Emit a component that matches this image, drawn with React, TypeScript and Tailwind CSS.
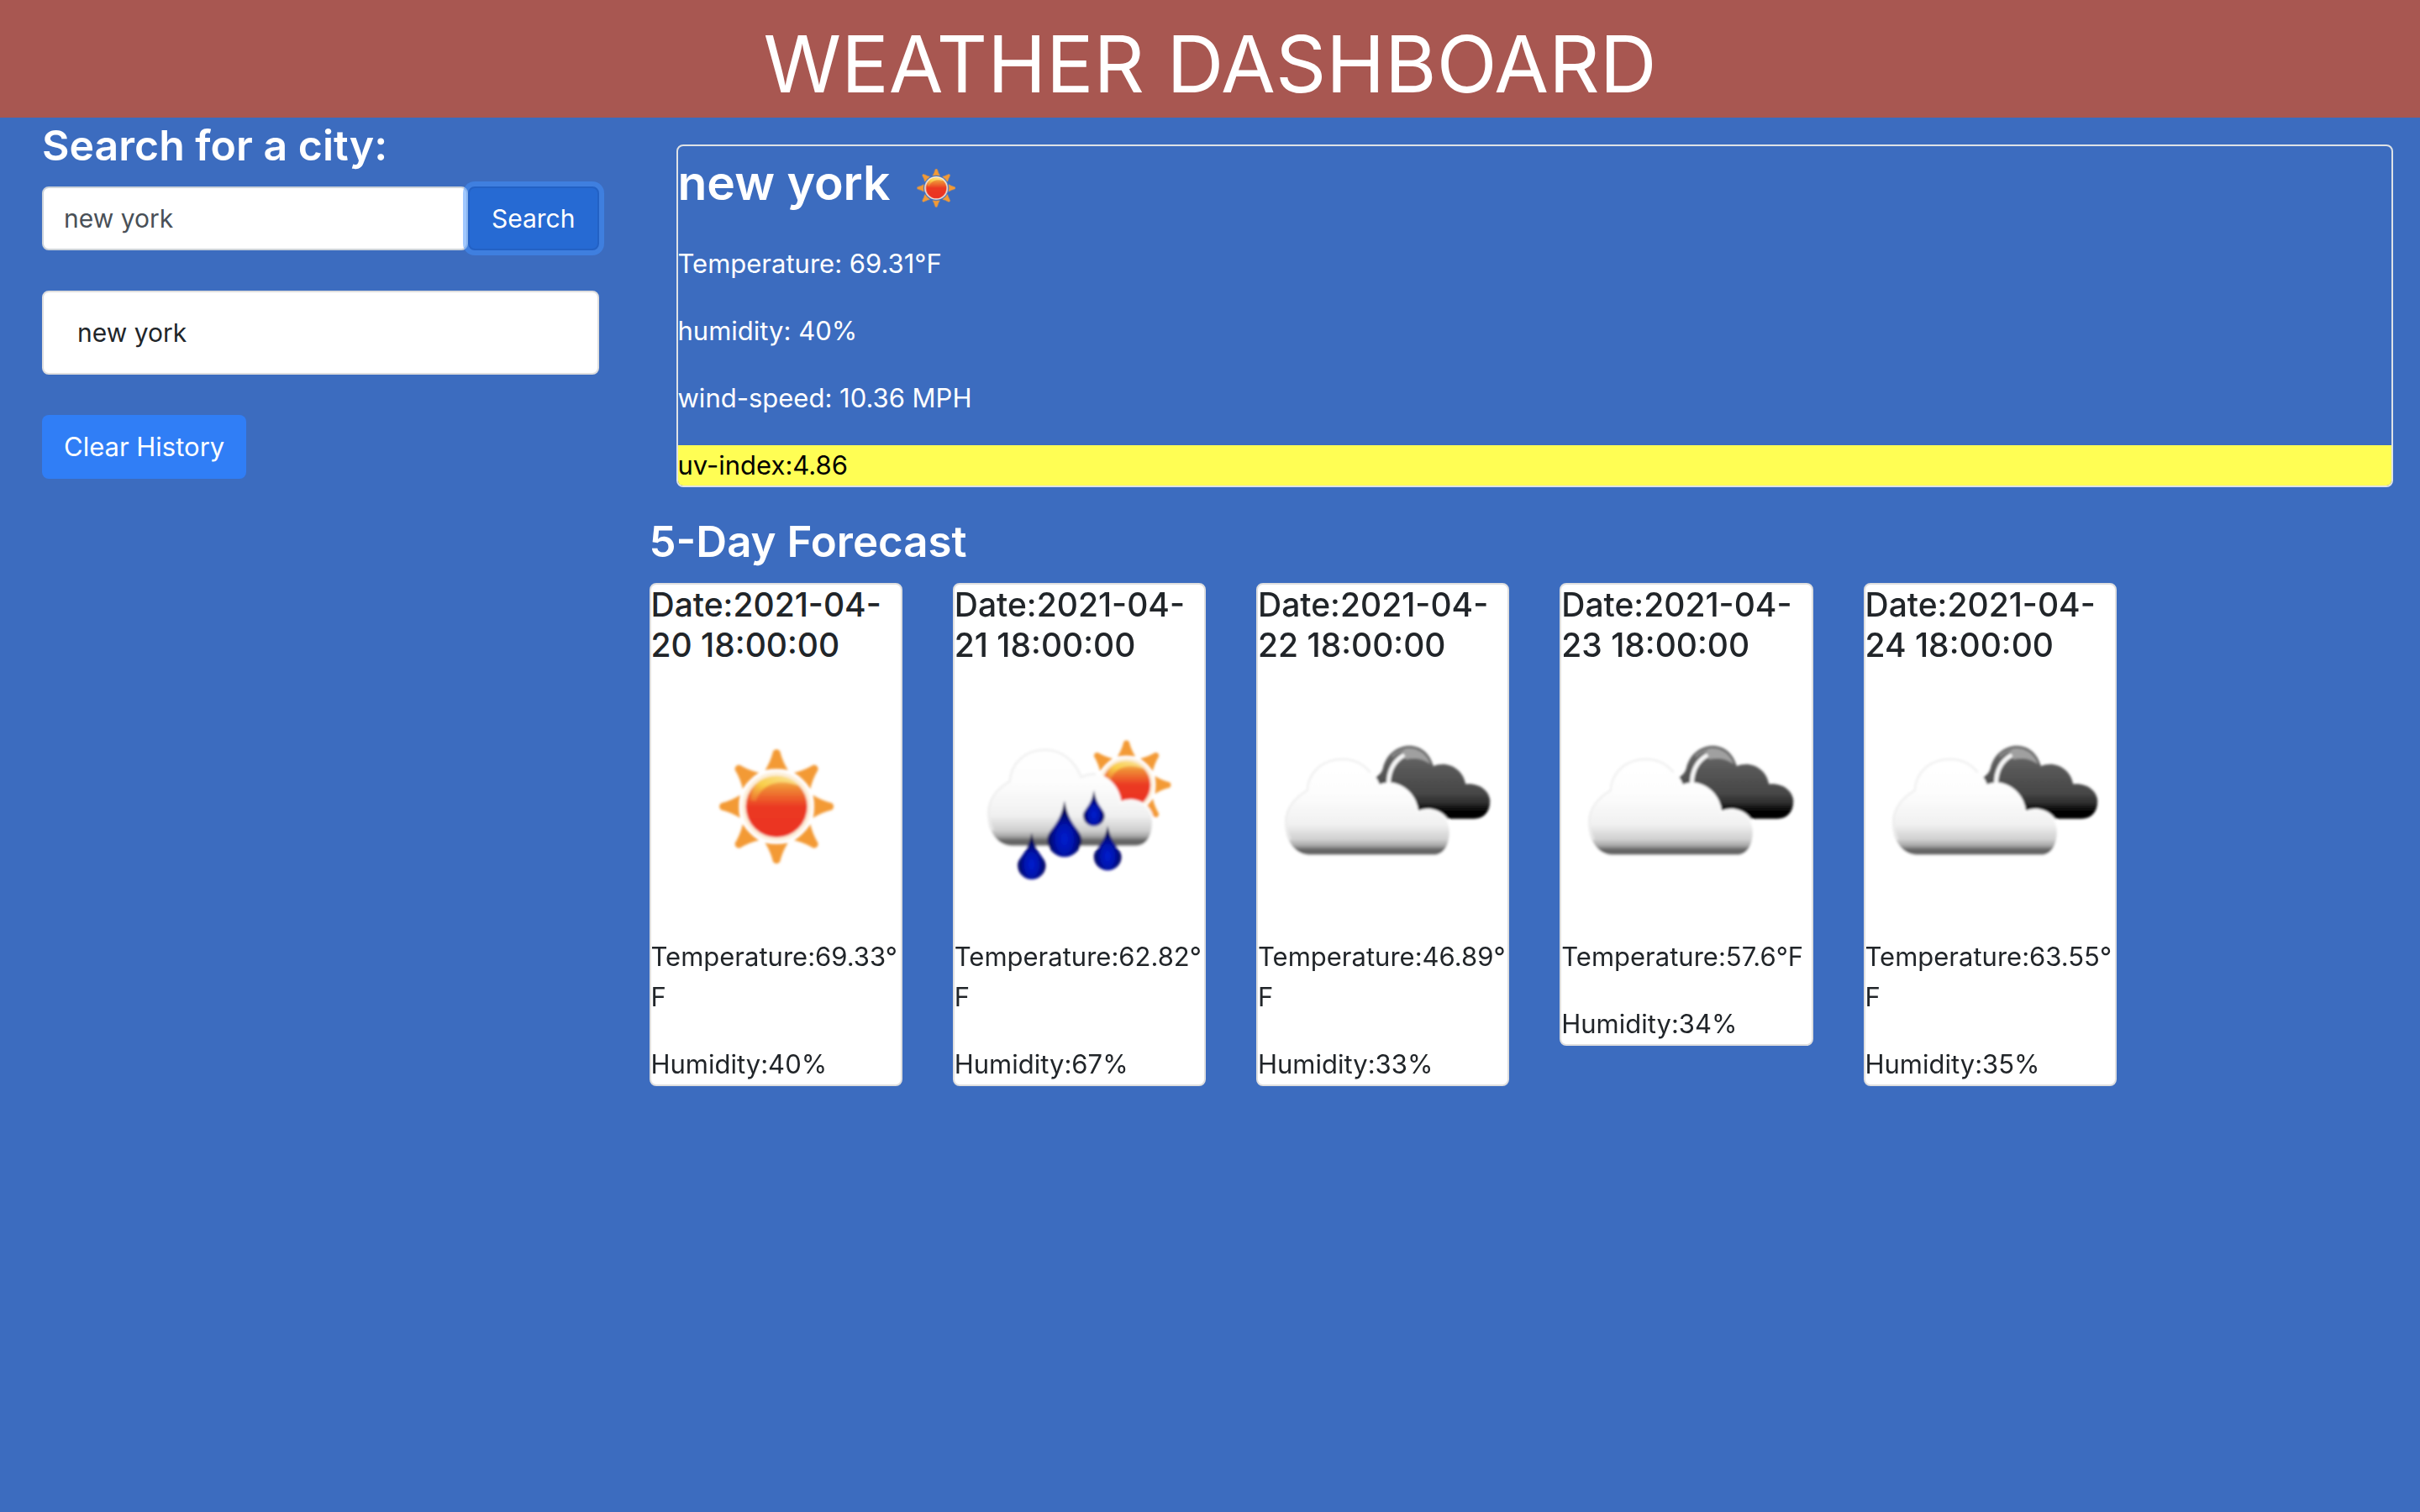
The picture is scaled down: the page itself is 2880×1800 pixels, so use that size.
import React, { useId, useState } from "react";

type IconKind = "sun" | "rain" | "clouds";

interface Day {
  date: string;
  icon: IconKind;
  temperature: string;
  humidity: string;
}

const FORECAST: Day[] = [
  { date: "2021-04-20 18:00:00", icon: "sun", temperature: "69.33°F", humidity: "40%" },
  { date: "2021-04-21 18:00:00", icon: "rain", temperature: "62.82°F", humidity: "67%" },
  { date: "2021-04-22 18:00:00", icon: "clouds", temperature: "46.89°F", humidity: "33%" },
  { date: "2021-04-23 18:00:00", icon: "clouds", temperature: "57.6°F", humidity: "34%" },
  { date: "2021-04-24 18:00:00", icon: "clouds", temperature: "63.55°F", humidity: "35%" },
];

const CLOUD =
  "M250 500 C195 496 165 440 165 380 C166 330 200 300 245 270 C248 205 300 158 370 158 C430 158 475 195 500 255 C560 230 628 270 637 350 C690 325 750 355 752 415 C752 460 735 500 695 500 Z";

const RAYS = [0, 45, 90, 135, 180, 225, 270, 315];

function Sun({ id, cx, cy, scale = 1 }: { id: string; cx: number; cy: number; scale?: number }) {
  return (
    <g transform={`translate(${cx} ${cy}) scale(${scale})`}>
      {RAYS.map((angle) => (
        <path
          key={angle}
          d="M-12 -198 Q0 -210 12 -198 Q22 -158 41 -130 Q0 -138 -41 -130 Q-22 -158 -12 -198 Z"
          transform={`rotate(${angle})`}
          fill="#f39a35"
        />
      ))}
      <circle r="124" fill="#fdf0dc" />
      <circle r="110" fill={`url(#${id}-sun)`} />
      <path
        d="M-92 -22 C-92 -82 -50 -108 0 -108 C34 -108 62 -96 80 -74 C30 -96 -48 -96 -74 -20 Z"
        fill={`url(#${id}-shine)`}
      />
    </g>
  );
}

function Drop({ id, x, top, bottom, r }: { id: string; x: number; top: number; bottom: number; r: number }) {
  const cy = bottom - r;
  return (
    <path
      d={`M${x} ${top} C${x + r * 0.25} ${cy - r * 0.8} ${x + r} ${cy - r * 0.6} ${x + r} ${cy} A${r} ${r} 0 0 1 ${x - r} ${cy} C${x - r} ${cy - r * 0.6} ${x - r * 0.25} ${cy - r * 0.8} ${x} ${top} Z`}
      fill={`url(#${id}-drop)`}
    />
  );
}

function WeatherIcon({ kind, className }: { kind: IconKind; className: string }) {
  const id = useId().replace(/[^a-zA-Z0-9]/g, "");
  const viewBox = {
    sun: "-138 -144 891 891",
    rain: "48 -84 891 891",
    clouds: "24 -114 891 891",
  }[kind];
  return (
    <svg viewBox={viewBox} className={className} role="img" aria-label={kind}>
      <defs>
        <linearGradient id={`${id}-sun`} x1="0" y1="0" x2="0" y2="1">
          <stop offset="0" stopColor="#f8c85a" />
          <stop offset="0.2" stopColor="#f08a34" />
          <stop offset="0.5" stopColor="#eb3a24" />
          <stop offset="1" stopColor="#eb3223" />
        </linearGradient>
        <linearGradient id={`${id}-shine`} x1="1" y1="0" x2="0" y2="1">
          <stop offset="0" stopColor="#fbe5a0" />
          <stop offset="0.55" stopColor="#f9cf4a" />
          <stop offset="1" stopColor="#f08a34" stopOpacity="0.5" />
        </linearGradient>
        <linearGradient id={`${id}-cloud`} x1="0" y1="158" x2="0" y2="500" gradientUnits="userSpaceOnUse">
          <stop offset="0" stopColor="#ffffff" />
          <stop offset="0.35" stopColor="#fdfdfd" />
          <stop offset="0.68" stopColor="#f1f1f1" />
          <stop offset="0.84" stopColor="#cfcfcf" />
          <stop offset="0.9" stopColor="#a8a8a8" />
          <stop offset="0.95" stopColor="#606060" />
          <stop offset="1" stopColor="#6e6e6e" />
        </linearGradient>
        <linearGradient id={`${id}-dark`} x1="0" y1="115" x2="0" y2="375" gradientUnits="userSpaceOnUse">
          <stop offset="0" stopColor="#6e6e6e" />
          <stop offset="0.3" stopColor="#585858" />
          <stop offset="0.65" stopColor="#464646" />
          <stop offset="0.78" stopColor="#2c2c2c" />
          <stop offset="0.9" stopColor="#000000" />
          <stop offset="1" stopColor="#080808" />
        </linearGradient>
        <radialGradient id={`${id}-drop`} cx="0.5" cy="0.68" r="0.6">
          <stop offset="0" stopColor="#001fd0" />
          <stop offset="0.4" stopColor="#0014b0" />
          <stop offset="0.75" stopColor="#000666" />
          <stop offset="1" stopColor="#000030" />
        </radialGradient>
        <filter id={`${id}-soft`} x="-10%" y="-10%" width="120%" height="120%">
          <feGaussianBlur stdDeviation="5" />
        </filter>
      </defs>
      <g filter={`url(#${id}-soft)`}>
        {kind === "sun" && <Sun id={id} cx={309} cy={300} />}
        {kind === "rain" && (
          <>
            <Sun id={id} cx={661} cy={283} scale={0.78} />
            <path d={CLOUD} fill={`url(#${id}-cloud)`} stroke="#ffffff" strokeWidth="14" />
            <path d={CLOUD} fill={`url(#${id}-cloud)`} />
            <path
              d="M185 445 C150 370 175 310 245 270 C248 205 300 158 370 158 C430 158 475 195 500 255 Q522 243 552 244"
              fill="none"
              stroke="#ececec"
              strokeWidth="6"
            />
            <Drop id={id} x={323} top={454} bottom={620} r={50} />
            <Drop id={id} x={440} top={340} bottom={540} r={61} />
            <Drop id={id} x={545} top={302} bottom={430} r={38} />
            <Drop id={id} x={594} top={428} bottom={588} r={49} />
          </>
        )}
        {kind === "clouds" && (
          <>
            <path
              d="M428 230 Q462 224 470 195 C480 145 520 113 565 113 C605 113 638 140 650 186 C700 165 755 195 765 250 C815 245 852 275 852 312 C852 350 830 374 795 374 L690 374 L600 345 L440 258 Z"
              fill={`url(#${id}-dark)`}
            />
            <path d="M535 128 C580 112 624 134 640 180 C612 158 580 156 552 162 Z" fill="#a0a0a0" />
            <path d="M490 250 Q490 178 546 146" fill="none" stroke="#f8f8f8" strokeWidth="15" />
            <path d="M503 152 Q520 134 546 130" fill="none" stroke="#8a8a8a" strokeWidth="8" />
            <g transform="translate(-45 3)">
              <path d={CLOUD} fill="#ffffff" stroke="#ffffff" strokeWidth="12" />
              <path d={CLOUD} fill={`url(#${id}-cloud)`} />
              <path
                d="M185 445 C150 370 175 310 245 270 C248 205 300 158 370 158 C410 158 445 175 470 205"
                fill="none"
                stroke="#ececec"
                strokeWidth="6"
              />
            </g>
          </>
        )}
      </g>
    </svg>
  );
}

function ForecastCard({ day }: { day: Day }) {
  return (
    <article className="rounded-lg border-2 border-[#dfdfdf] bg-white text-[#212529] wrap-anywhere">
      <h4 className="mb-5 text-[39px] leading-[48px] font-medium">{`Date:${day.date}`}</h4>
      <WeatherIcon kind={day.icon} className="mb-1.5 block aspect-square w-full" />
      <p className="mb-8 text-[31px] leading-[48px]">{`Temperature:${day.temperature}`}</p>
      <p className="text-[31px] leading-[48px]">{`Humidity:${day.humidity}`}</p>
    </article>
  );
}

export default function App() {
  const [city, setCity] = useState("new york");
  return (
    <div className="min-h-screen bg-[#3c6cbf] font-[Inter,'Liberation_Sans',sans-serif] text-white">
      <header className="bg-[#a85751] pt-4 pb-1">
        <h1 className="text-center text-[94px] leading-[120px] font-normal">WEATHER DASHBOARD</h1>
      </header>

      <div className="grid grid-cols-12 gap-x-[60px] pl-[50px]">
        <aside className="col-span-3">
          <label htmlFor="city" className="mb-4 block text-[50px] leading-[66px] font-semibold">
            Search for a city:
          </label>
          <form className="flex" onSubmit={(e) => e.preventDefault()}>
            <input
              id="city"
              type="text"
              value={city}
              onChange={(e) => setCity(e.target.value)}
              className="h-[76px] min-w-0 flex-1 rounded-lg border-2 border-[#ced4da] bg-white px-6 text-[30px] text-[#495057] outline-none"
            />
            <button
              type="submit"
              className="h-[76px] rounded-lg border-2 border-[#2361c4] bg-[#266ad3] px-[26px] text-[30px] ring-[6px] ring-[#4292ff]/50"
            >
              Search
            </button>
          </form>
          <ul className="my-12 rounded-lg border-2 border-[#dfdfdf] bg-white px-10 py-6 text-[30px] leading-[48px] text-[#212529]">
            <li>new york</li>
          </ul>
          <button type="button" className="h-[76px] rounded-lg bg-[#307ef6] px-[26px] text-[31px]">
            Clear History
          </button>
        </aside>

        <main className="col-span-9">
          <section className="m-8 overflow-hidden rounded-lg border-2 border-[#dee2e6] text-[31px] leading-[48px]">
            <h2 className="mb-4 flex items-start gap-1 text-[57px] leading-[88px] font-semibold">
              new york
              <WeatherIcon kind="sun" className="size-[100px]" />
            </h2>
            <p className="mb-8">Temperature: 69.31°F</p>
            <p className="mb-8">humidity: 40%</p>
            <p className="mb-8">wind-speed: 10.36 MPH</p>
            <p className="bg-[#fffe54] text-black">uv-index:4.86</p>
          </section>

          <h3 className="mb-4 text-[51px] leading-[66px] font-semibold">5-Day Forecast</h3>
          <div className="grid grid-cols-6 items-start gap-x-[60px]">
            {FORECAST.map((day) => (
              <ForecastCard key={day.date} day={day} />
            ))}
          </div>
        </main>
      </div>
    </div>
  );
}
